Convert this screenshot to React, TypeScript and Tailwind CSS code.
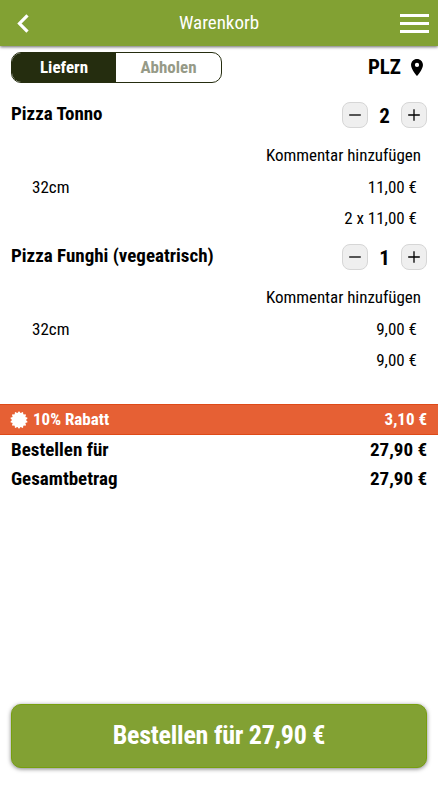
import { useState } from 'react';

const cartItems = [
  { name: 'Pizza Tonno', size: '32cm', amount: 2, price: '11,00 €', total: '2 x 11,00 €' },
  { name: 'Pizza Funghi (vegeatrisch)', size: '32cm', amount: 1, price: '9,00 €', total: '9,00 €' },
];

const totals = [
  { label: 'Bestellen für', value: '27,90 €' },
  { label: 'Gesamtbetrag', value: '27,90 €' },
];

// Badge with 14 blunt teeth in front of the discount
const badgePoints = Array.from({ length: 56 }, (_, i) => {
  const radius = i % 4 < 2 ? 8.6 : 7.3;
  const angle = ((i - 0.5) * Math.PI) / 28;
  return `${9 + radius * Math.sin(angle)},${9 - radius * Math.cos(angle)}`;
}).join(' ');

function StepButton({ plus = false }: { plus?: boolean }) {
  return (
    <button
      aria-label={plus ? 'Mehr' : 'Weniger'}
      className="flex h-[26px] w-[26px] items-center justify-center rounded-lg border border-[#d6d6d6] bg-[#efefef]"
    >
      <svg viewBox="0 0 12 12" className="h-3 w-3" stroke="black" strokeWidth="1.3">
        <path d={plus ? 'M0.200 6h11.600M6 0.200v11.600' : 'M0.200 6h11.600'} />
      </svg>
    </button>
  );
}

export default function App() {
  const [delivery, setDelivery] = useState(true);

  return (
    <div className="flex h-[800px] w-full flex-col bg-white font-['Roboto_Condensed','Roboto',sans-serif] text-black font-stretch-75%">
      {/* Header */}
      <header className="flex h-[46px] shrink-0 items-center bg-[#82a133] px-[9px] text-white shadow-[0_1px_3px_rgba(0,0,0,0.6)]">
        <button aria-label="Zurück" className="w-[29px] pl-2">
          <svg viewBox="0 0 12 19" className="h-[19px] w-3" fill="none" stroke="currentColor" strokeWidth="3.2">
            <path d="M10.5 1.300 2.500 9.500l8 8.200" />
          </svg>
        </button>
        <h1 className="flex-1 text-center text-[19px] font-normal">Warenkorb</h1>
        <button aria-label="Menü" className="flex w-[29px] flex-col gap-[5px]">
          <span className="h-[3px] bg-white" />
          <span className="h-[3px] bg-white" />
          <span className="h-[3px] bg-white" />
        </button>
      </header>

      {/* Lieferart + PLZ */}
      <div className="mt-1.5 flex h-[31px] shrink-0 items-center justify-between pr-[15px] pl-[11px]">
        <div className="flex h-[31px] w-[211px] overflow-hidden rounded-[10px] border border-[#252d0f] text-[17px] font-bold">
          <button
            onClick={() => setDelivery(true)}
            className={`w-[104px] ${delivery ? 'bg-[#252d0f] text-white' : 'text-[#969a87]'}`}
          >
            Liefern
          </button>
          <button
            onClick={() => setDelivery(false)}
            className={`flex-1 ${delivery ? 'text-[#969a87]' : 'bg-[#252d0f] text-white'}`}
          >
            Abholen
          </button>
        </div>
        <div className="flex items-center gap-[10px] text-[21px] font-bold">
          PLZ
          <svg viewBox="5 2 14 20" className="h-[17px] w-3">
            <path
              fillRule="evenodd"
              d="M12 2C8.13 2 5 5.13 5 9c0 5.25 7 13 7 13s7-7.75 7-13c0-3.87-3.13-7-7-7zm0 9.500a2.500 2.500 0 1 1 0-5 2.500 2.500 0 0 1 0 5z"
            />
          </svg>
        </div>
      </div>

      {/* Artikel */}
      <main className="mt-[19px] shrink-0">
        {cartItems.map((item) => (
          <section key={item.name} className="h-[142px] text-[17px]">
            <div className="flex h-[26px] items-center justify-between px-[11px]">
              <h2 className="pb-0.5 text-[19px] font-bold">{item.name}</h2>
              <div className="flex items-center">
                <StepButton />
                <span className="w-[33px] pt-0.5 text-center text-[21px] leading-6 font-bold">{item.amount}</span>
                <StepButton plus />
              </div>
            </div>
            <div className="mt-3 flex h-[31px] items-center justify-end pr-[17px] tracking-[-0.04px]">
              Kommentar hinzufügen
            </div>
            <div className="flex h-[31px] items-center justify-between pt-0.5 pr-[21px] pl-8">
              <span>{item.size}</span>
              <span>{item.price}</span>
            </div>
            <div className="flex h-[31px] items-center justify-end pt-0.5 pr-[21px]">{item.total}</div>
          </section>
        ))}
      </main>

      {/* Rabatt */}
      <div className="mt-[18px] flex h-[31px] shrink-0 items-center justify-between border-y border-[#de4a18] bg-[#e66034] pr-[11px] pl-2.5 text-[17px] font-bold text-white">
        <div className="flex items-center gap-[5px]">
          <svg viewBox="0 0 18 18" className="h-[18px] w-[18px]" fill="currentColor">
            <polygon points={badgePoints} />
          </svg>
          10% Rabatt
        </div>
        <span>3,10 €</span>
      </div>

      {/* Summe */}
      <dl className="pt-px text-[19px] font-bold">
        {totals.map((row) => (
          <div key={row.label} className="flex h-[28.5px] items-center justify-between px-[11px]">
            <dt>{row.label}</dt>
            <dd>{row.value}</dd>
          </div>
        ))}
      </dl>

      <button className="mx-[11px] mt-auto mb-8 h-16 shrink-0 rounded-[10px] border border-[#779f0f] bg-[#82a133] pb-0.5 text-[26px] font-bold tracking-[-0.24px] text-white shadow-[0_1px_4px_rgba(0,0,0,0.5)]">
        Bestellen für 27,90 €
      </button>
    </div>
  );
}
